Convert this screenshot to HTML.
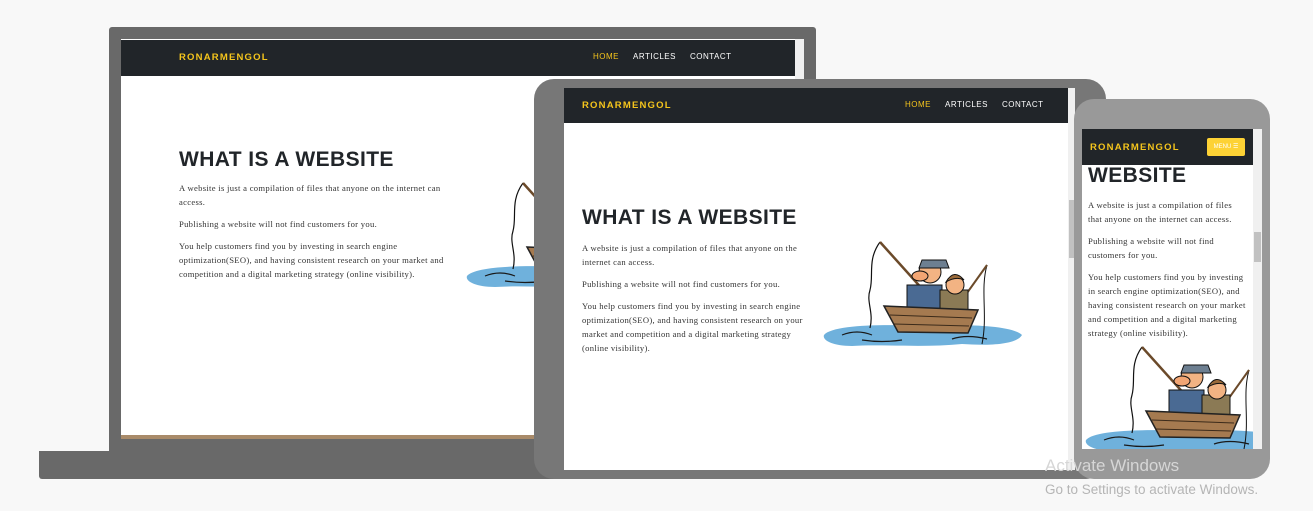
<!DOCTYPE html>
<html><head><meta charset="utf-8"><style>
*{margin:0;padding:0;box-sizing:border-box}
body{width:1313px;height:511px;background:#f8f8f8;position:relative;overflow:hidden;font-family:"Liberation Serif",serif}
.a{position:absolute}
.scr{position:absolute;background:#fff;overflow:hidden}
.hdr{position:absolute;left:0;top:0;background:#212529}
.brand{position:absolute;color:#f5c51c;font:bold 9.5px "Liberation Sans",sans-serif;letter-spacing:1.2px}
.nav{position:absolute;color:#fff;font:8px "Liberation Sans",sans-serif;letter-spacing:.5px}
.nav span{margin-right:14px}
.nav .h{color:#f5c51c}
h1{position:absolute;font:bold 21px "Liberation Sans",sans-serif;color:#212529;letter-spacing:.4px;white-space:nowrap}
.p{position:absolute;font-size:8.6px;line-height:14px;color:#333;letter-spacing:.3px}
.p div{margin-bottom:8px}
.sb{position:absolute;background:#f0f0f0}
.th{position:absolute;background:#c1c1c1}
</style></head><body>
<svg width="0" height="0" style="position:absolute"><defs>
<g id="fish">
<path d="M2,95 C10,85 60,84 100,86 C140,84 190,85 200,95 C195,104 170,106 140,104 C100,108 60,104 30,106 C10,106 0,100 2,95Z" fill="#6fb1dc"/>
<path d="M20,95 q15,-6 30,0 M130,99 q15,-5 35,0 M40,100 q20,3 40,0" stroke="#1a1a1a" stroke-width="1.2" fill="none"/>
<path d="M58,2 C45,20 52,35 48,50 C44,62 52,72 48,88" stroke="#111" stroke-width="1.2" fill="none"/>
<path d="M58,2 L112,62" stroke="#6b4a2a" stroke-width="2.5"/>
<path d="M165,25 C158,50 166,75 160,104" stroke="#111" stroke-width="1" fill="none"/>
<path d="M140,60 L165,25" stroke="#6b4a2a" stroke-width="2"/>
<path d="M85,45 h35 v25 h-35z" fill="#4a6a93" stroke="#111" stroke-width="1"/>
<path d="M118,50 h28 v22 h-28z" fill="#8b7a55" stroke="#111" stroke-width="1"/>
<circle cx="108" cy="32" r="11" fill="#f2b383" stroke="#111"/>
<ellipse cx="98" cy="36" rx="8" ry="5" fill="#f2a573" stroke="#111"/>
<path d="M100,20 h24 l3,8 h-30z" fill="#6d7f91" stroke="#111"/>
<circle cx="133" cy="45" r="9" fill="#f2b383" stroke="#111"/>
<path d="M124,42 q8,-14 18,-2 q-8,-4 -18,2z" fill="#9a6a3a" stroke="#111"/>
<path d="M62,66 L156,70 L146,93 L76,92Z" fill="#a57a50" stroke="#222" stroke-width="1.5"/>
<path d="M68,75 L150,78 M72,84 L147,86" stroke="#3b2a1a" stroke-width="1"/>
</g></defs></svg>

<!-- laptop -->
<div class="a" style="left:109px;top:27px;width:707px;height:430px;background:#696969;border-radius:3px 3px 0 0"></div>
<div class="a" style="left:39px;top:451px;width:520px;height:28px;background:#696969;border-radius:0 0 3px 3px"></div>
<div class="scr" style="left:121px;top:39px;width:683px;height:396px">
  <div class="hdr" style="width:674px;height:36px;top:1px"></div>
  <div class="brand" style="left:58px;top:13px">RONARMENGOL</div>
  <div class="nav" style="left:472px;top:13px"><span class="h">HOME</span><span>ARTICLES</span><span>CONTACT</span></div>
  <div class="sb" style="left:674px;top:0;width:9px;height:396px"></div>
  <h1 style="left:58px;top:109px">WHAT IS A WEBSITE</h1>
  <div class="p" style="left:58px;top:142px;width:278px"><div>A website is just a compilation of files that anyone on the internet can access.</div><div>Publishing a website will not find customers for you.</div><div>You help customers find you by investing in search engine optimization(SEO), and having consistent research on your market and competition and a digital marketing strategy (online visibility).</div></div>
  <svg class="a" style="left:344px;top:142px" width="200" height="110" viewBox="0 0 200 110"><use href="#fish"/></svg>
</div>
<div class="a" style="left:121px;top:435px;width:420px;height:4px;background:#a98b6a"></div>

<!-- tablet -->
<div class="a" style="left:534px;top:79px;width:572px;height:400px;background:#777;border-radius:20px"></div>
<div class="scr" style="left:564px;top:88px;width:511px;height:382px">
  <div class="hdr" style="width:504px;height:35px"></div>
  <div class="brand" style="left:18px;top:12px">RONARMENGOL</div>
  <div class="nav" style="left:341px;top:12px"><span class="h">HOME</span><span>ARTICLES</span><span>CONTACT</span></div>
  <div class="sb" style="left:504px;top:0;width:7px;height:382px"></div>
  <div class="th" style="left:505px;top:112px;width:5px;height:58px"></div>
  <h1 style="left:18px;top:118px">WHAT IS A WEBSITE</h1>
  <div class="p" style="left:18px;top:153px;width:230px"><div>A website is just a compilation of files that anyone on the internet can access.</div><div>Publishing a website will not find customers for you.</div><div>You help customers find you by investing in search engine optimization(SEO), and having consistent research on your market and competition and a digital marketing strategy (online visibility).</div></div>
  <svg class="a" style="left:258px;top:152px" width="200" height="110" viewBox="0 0 200 110"><use href="#fish"/></svg>
</div>

<!-- phone -->
<div class="a" style="left:1074px;top:99px;width:196px;height:380px;background:#999;border-radius:20px"></div>
<div class="scr" style="left:1082px;top:129px;width:180px;height:320px">
  <h1 style="left:6px;top:35px">WEBSITE</h1>
  <div class="p" style="left:6px;top:69px;width:160px"><div>A website is just a compilation of files that anyone on the internet can access.</div><div>Publishing a website will not find customers for you.</div><div>You help customers find you by investing in search engine optimization(SEO), and having consistent research on your market and competition and a digital marketing strategy (online visibility).</div></div>
  <svg class="a" style="left:2px;top:216px" width="200" height="110" viewBox="0 0 200 110"><use href="#fish"/></svg>
  <div class="hdr" style="width:171px;height:36px"></div>
  <div class="brand" style="left:8px;top:13px">RONARMENGOL</div>
  <div class="a" style="left:125px;top:9px;width:38px;height:18px;background:#fdd235;border-radius:2px;color:#fff;font:6px 'Liberation Sans',sans-serif;line-height:18px;text-align:center">MENU ☰</div>
  <div class="sb" style="left:171px;top:0;width:9px;height:320px"></div>
  <div class="th" style="left:172px;top:103px;width:7px;height:30px"></div>
</div>

<div class="a" style="left:1045px;top:456px;font:17px 'Liberation Sans',sans-serif;color:#d6d6d6">Activate Windows</div>
<div class="a" style="left:1045px;top:482px;font:13.5px 'Liberation Sans',sans-serif;color:#b5b5b5">Go to Settings to activate Windows.</div>
</body></html>
